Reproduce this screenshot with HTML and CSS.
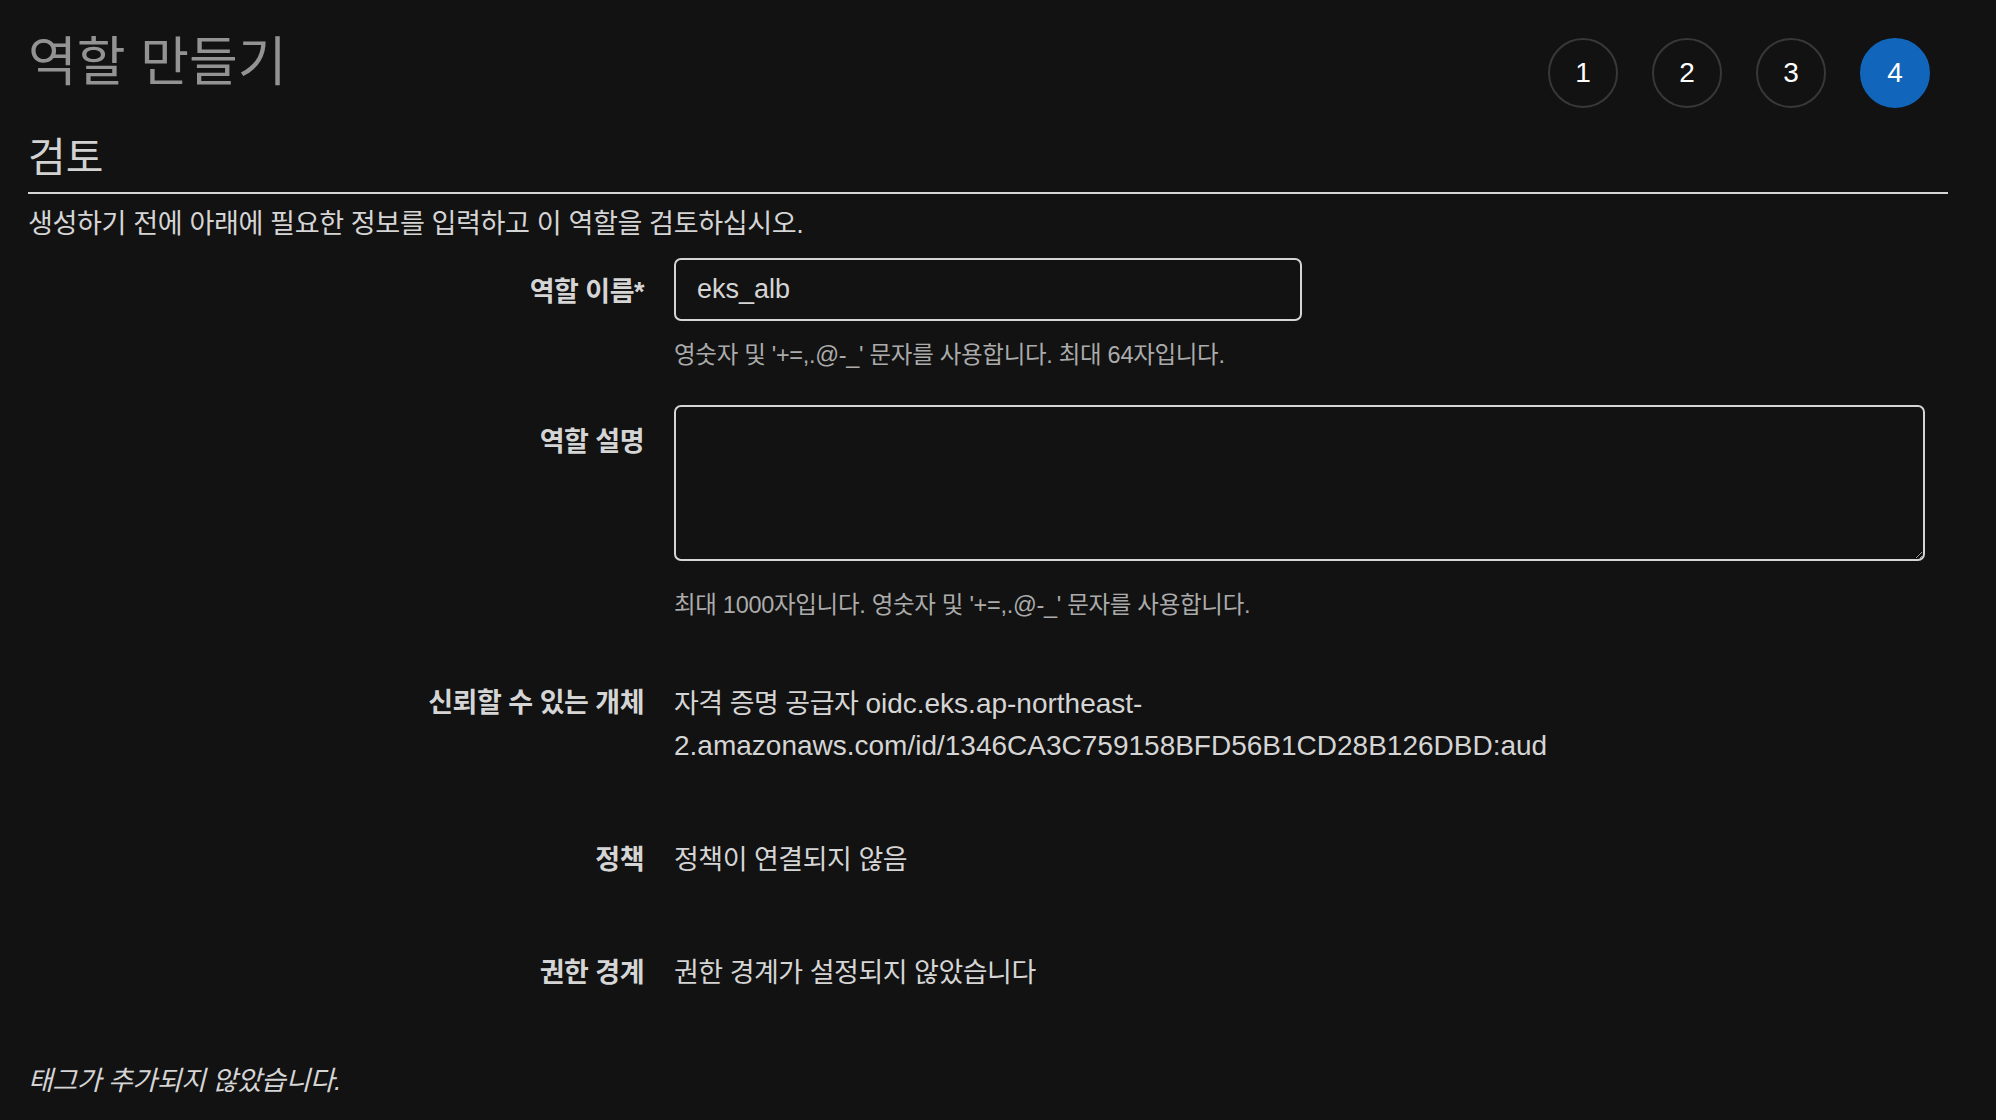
FILE: index.html
```html
<html>
  <head>
    <meta charset="utf-8">
    <meta name="viewport" content="width=device-width,initial-scale=1">
    <link rel="stylesheet" href="styles.css">
  </head>

  <body>
    <div class="page">

      <header class="page_header">
        <h1 class="page_title">역할 만들기</h1>
        <ol class="steps">
          <li class="step">1</li>
          <li class="step">2</li>
          <li class="step">3</li>
          <li class="step step_active">4</li>
        </ol>
      </header>

      <h2 class="section_title">검토</h2>
      <p class="intro">생성하기 전에 아래에 필요한 정보를 입력하고 이 역할을 검토하십시오.</p>

      <div class="review">
        <div class="field field_name">
          <label class="field_label" for="role_name">역할 이름*</label>
          <div class="field_control">
            <input id="role_name" class="text_input" type="text" value="eks_alb">
            <p class="hint">영숫자 및 '+=,.@-_' 문자를 사용합니다. 최대 64자입니다.</p>
          </div>
        </div>

        <div class="field field_desc">
          <label class="field_label" for="role_desc">역할 설명</label>
          <div class="field_control">
            <textarea id="role_desc" class="text_area"></textarea>
            <p class="hint hint_desc">최대 1000자입니다. 영숫자 및 '+=,.@-_' 문자를 사용합니다.</p>
          </div>
        </div>

        <!-- read-only rows -->
        <div class="field field_info field_trust">
          <div class="field_label">신뢰할 수 있는 개체</div>
          <div class="field_value">자격 증명 공급자 <span class="latin">oidc.eks.ap-northeast-</span><br><span class="latin">2.amazonaws.com/id/1346CA3C759158BFD56B1CD28B126DBD:aud</span></div>
        </div>

        <div class="field field_info">
          <div class="field_label">정책</div>
          <div class="field_value">정책이 연결되지 않음</div>
        </div>

        <div class="field field_info">
          <div class="field_label">권한 경계</div>
          <div class="field_value">권한 경계가 설정되지 않았습니다</div>
        </div>
      </div>

      <p class="no_tags">태그가 추가되지 않았습니다.</p>
    </div>
  </body>
</html>
```

FILE: styles.css
```css
html, body {
    margin: 0;
    background: #121212;
}
body {
    font-family: 'Liberation Sans', 'Noto Sans CJK KR', sans-serif;
    color: #d5d5d5;
    font-size: 27px;
    letter-spacing: -0.5px;
}
.page {
    padding: 0 48px 0 28px;
}

/* header with title and wizard steps */
.page_header {
    display: flex;
    justify-content: space-between;
    align-items: flex-start;
    padding-top: 28px;
}
.page_title {
    margin: 0;
    font-size: 53px;
    line-height: 70px;
    font-weight: normal;
    color: #939393;
    letter-spacing: 0;
}
.steps {
    display: flex;
    gap: 34px;
    list-style: none;
    margin: 10px 18px 0 0;
    padding: 0;
}
.step {
    width: 70px;
    height: 70px;
    box-sizing: border-box;
    border: 2px solid #383838;
    border-radius: 50%;
    display: flex;
    align-items: center;
    justify-content: center;
    font-size: 28px;
    color: #fff;
    letter-spacing: 0;
}
.step_active {
    background: #1166bb;
    border-color: #1166bb;
}

.section_title {
    margin: 26px 0 0 0;
    padding-bottom: 10px;
    border-bottom: 2px solid #d5d5d5;
    font-size: 41px;
    line-height: 48px;
    font-weight: normal;
    color: #d2d2d2;
    letter-spacing: 0;
}
.intro {
    margin: 12px 0 0 0;
    font-size: 27.1px;
    line-height: 36px;
    letter-spacing: -0.4px;
}

/* form rows */
.field {
    display: grid;
    grid-template-columns: 616px 1251px;
    column-gap: 30px;
}
.field_label {
    text-align: right;
    font-weight: bold;
    line-height: 41px;
}
.field_name {
    margin-top: 16px;
}
.field_name .field_label {
    padding-top: 3px;
    line-height: 63px;
}
.field_desc {
    margin-top: 35px;
}
.field_desc .field_label {
    padding-top: 19px;
    line-height: 36px;
}
.text_input {
    display: block;
    width: 628px;
    height: 63px;
    box-sizing: border-box;
    padding: 0 21px;
    border: 2px solid #d5d5d5;
    border-radius: 7px;
    background: transparent;
    color: #d5d5d5;
    font-family: 'Liberation Sans', sans-serif;
    font-size: 27px;
    outline: none;
}
.text_area {
    display: block;
    width: 100%;
    height: 156px;
    box-sizing: border-box;
    border: 2px solid #d5d5d5;
    border-radius: 7px;
    background: transparent;
    color: #d5d5d5;
    color-scheme: dark;
}
.hint {
    margin: 19px 0 0 0;
    font-size: 23.5px;
    line-height: 30px;
    letter-spacing: -0.3px;
    color: #ababab;
}
.hint_desc {
    margin-top: 29px;
}
.field_info {
    margin-top: 72px;
}
.field_trust {
    margin-top: 63px;
    padding-bottom: 2px;
}
.field_value {
    line-height: 41px;
}
.latin {
    font-size: 28px;
    letter-spacing: 0;
}
.no_tags {
    margin: 67px 0 0 0;
    line-height: 41px;
    font-style: italic;
}
```
